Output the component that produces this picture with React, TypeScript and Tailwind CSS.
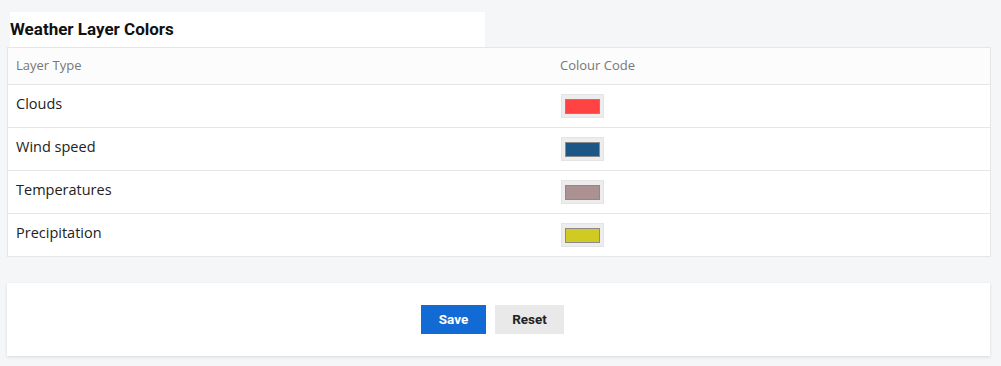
import React from 'react';

const layers = [
  { name: 'Clouds', color: '#ff4343' },
  { name: 'Wind speed', color: '#1b5687' },
  { name: 'Temperatures', color: '#ab9191' },
  { name: 'Precipitation', color: '#d0ca22' },
];

function Swatch({ color }: { color: string }) {
  return (
    <div className="w-[43px] h-[24px] bg-[#ededed] border border-[#e4e4e4] flex items-center justify-center">
      <div className="w-[35px] h-[15px] border border-[#8a8a8a]" style={{ backgroundColor: color }} />
    </div>
  );
}

export default function App() {
  return (
    <div className="min-h-screen bg-[#f5f6f8] pl-[7px] pt-[12px] pb-[10px]" style={{ fontFamily: '"Open Sans", sans-serif' }}>
      {/* title */}
      <div className="ml-[3px] w-[475px] h-[35px] bg-white flex items-center">
        <h2 className="text-[17px] font-bold text-[#111] font-['Roboto',sans-serif]">
          Weather Layer Colors
        </h2>
      </div>

      {/* table */}
      <div className="w-[984px] bg-white border border-[#e6e6e6]">
        <div className="grid grid-cols-[544px_1fr] h-[37px] items-center bg-[#fcfcfc] border-b border-[#e6e6e6] text-[13px] text-[#777]">
          <div className="pl-[8px]">Layer Type</div>
          <div className="pl-[8px]">Colour Code</div>
        </div>
        {layers.map((l, i) => (
          <div
            key={l.name}
            className={`grid grid-cols-[544px_1fr] items-center ${i < layers.length - 1 ? 'h-[43px] border-b border-[#e6e6e6]' : 'h-[42px]'}`}
          >
            <div className="pl-[8px] text-[14.5px] text-[#222] -mt-[5px]">{l.name}</div>
            <div className="pl-[9px]">
              <Swatch color={l.color} />
            </div>
          </div>
        ))}
      </div>

      {/* actions */}
      <div className="mt-[26px] w-[983px] h-[73px] bg-white shadow-[0_1px_3px_rgba(0,0,0,0.12)] flex items-center justify-center gap-[9px] pr-[12px] font-['Roboto',sans-serif]">
        <button className="w-[65px] h-[29px] bg-[#126bd4] text-white text-[13.5px] font-bold">Save</button>
        <button className="w-[69px] h-[29px] bg-[#e9e9e9] text-[#222] text-[13.5px] font-bold">Reset</button>
      </div>
    </div>
  );
}
